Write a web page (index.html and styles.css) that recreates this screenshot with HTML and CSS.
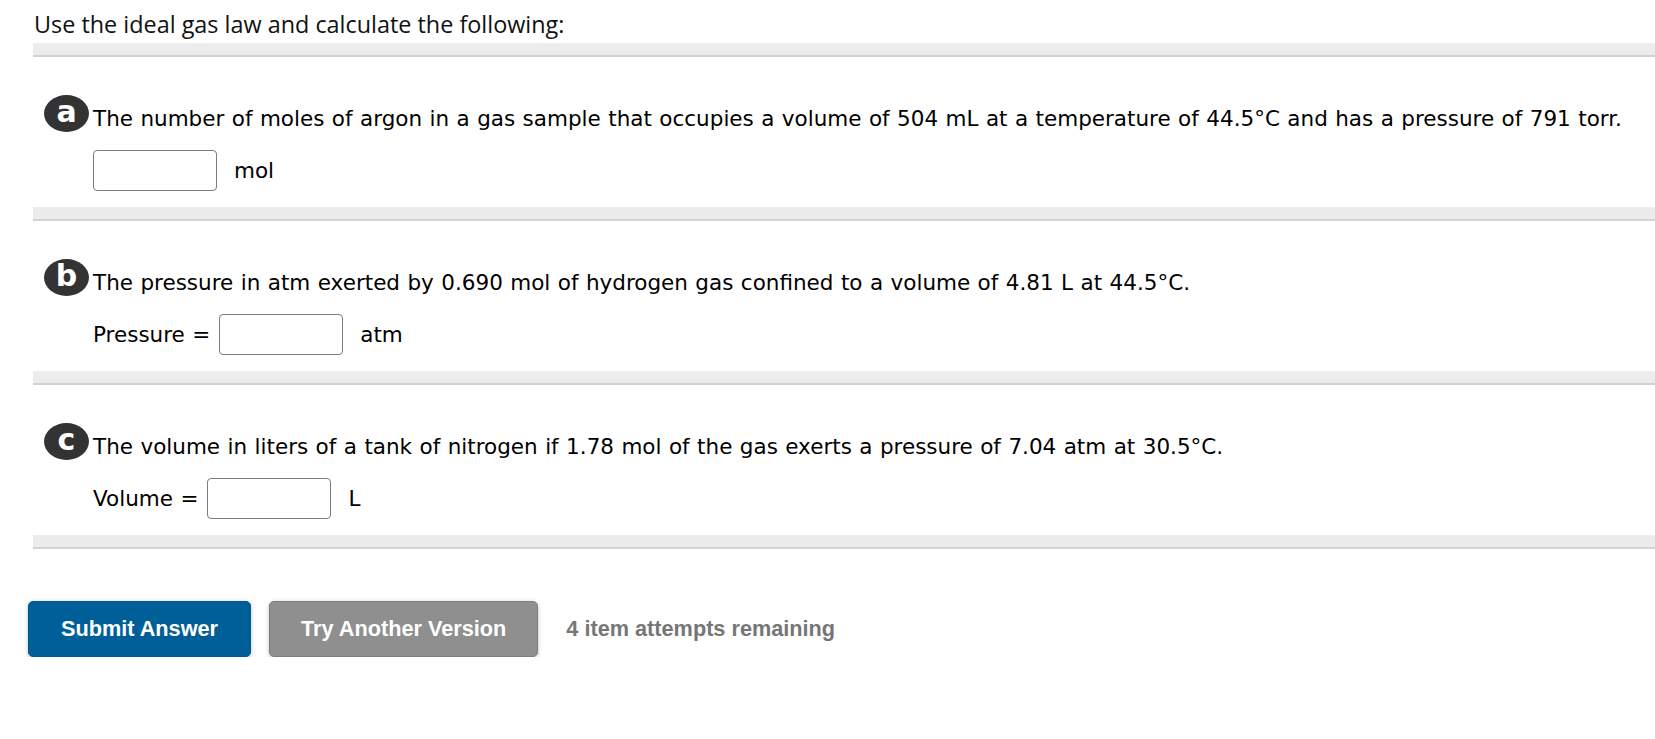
FILE: index.html
```html
<!DOCTYPE html>
<html lang="en">
<head>
<meta charset="utf-8">
<title>Ideal gas law</title>
<link rel="stylesheet" href="styles.css">
</head>
<body>
<div class="page">
  <h1 class="intro">Use the ideal gas law and calculate the following:</h1>
  <div class="divider"></div>

  <section class="part">
    <div class="question">
      <span class="badge">a</span>
      <p class="qtext">The number of moles of argon in a gas sample that occupies a volume of 504 mL at a temperature of 44.5°C and has a pressure of 791 torr.</p>
    </div>
    <div class="answer">
      <input class="box" type="text" aria-label="moles">
      <span class="unit">mol</span>
    </div>
  </section>
  <div class="divider"></div>

  <section class="part">
    <div class="question">
      <span class="badge">b</span>
      <p class="qtext">The pressure in atm exerted by 0.690 mol of hydrogen gas confined to a volume of 4.81 L at 44.5°C.</p>
    </div>
    <div class="answer">
      <span class="label">Pressure =</span>
      <input class="box" type="text" aria-label="Pressure">
      <span class="unit">atm</span>
    </div>
  </section>
  <div class="divider"></div>

  <section class="part">
    <div class="question">
      <span class="badge">c</span>
      <p class="qtext">The volume in liters of a tank of nitrogen if 1.78 mol of the gas exerts a pressure of 7.04 atm at 30.5°C.</p>
    </div>
    <div class="answer">
      <span class="label">Volume =</span>
      <input class="box" type="text" aria-label="Volume">
      <span class="unit">L</span>
    </div>
  </section>
  <div class="divider"></div>

  <div class="actions">
    <button class="btn btn-primary" type="button">Submit Answer</button>
    <button class="btn btn-secondary" type="button">Try Another Version</button>
    <span class="attempts">4 item attempts remaining</span>
  </div>
</div>
</body>
</html>
```

FILE: styles.css
```css
html, body {
  margin: 0;
  padding: 0;
  background: #ffffff;
}

.page {
  padding-left: 33px;
  color: #000;
}

.intro {
  margin: 9px 0 4px 1px;
  font-family: "Open Sans", "Liberation Sans", sans-serif;
  font-weight: 400;
  font-size: 23.4px;
  line-height: 30px;
  color: #111;
}

.divider {
  height: 12px;
  background: #ececec;
  border-bottom: 2px solid #d2d2d2;
}

.part {
  padding: 38px 0 16px 11px;
  font-family: "DejaVu Sans", Verdana, sans-serif;
  font-size: 21.5px;
  word-spacing: 0.6px;
}

.question {
  display: flex;
  align-items: flex-start;
  height: 37px;
}

.badge {
  flex: 0 0 auto;
  width: 45px;
  height: 37px;
  border-radius: 50%;
  background: #333333;
  color: #fff;
  font-family: "DejaVu Sans", Verdana, sans-serif;
  font-weight: 700;
  font-size: 30px;
  line-height: 34px;
  text-align: center;
  word-spacing: 0;
  margin-right: 4px;
}

.qtext {
  margin: 11px 0 0 0;
  line-height: 26px;
  white-space: nowrap;
}

.answer {
  display: flex;
  align-items: center;
  margin-top: 18px;
  padding-left: 49px;
  height: 41px;
}

.label {
  margin-right: 9px;
}

.box {
  box-sizing: border-box;
  width: 124px;
  height: 41px;
  margin: 0;
  border: 1px solid #7d7d7d;
  border-radius: 4px;
  background: #fff;
}

.unit {
  margin-left: 17px;
}

.actions {
  display: flex;
  align-items: center;
  margin-top: 52px;
  margin-left: -5px;
  font-family: "Liberation Sans", Arial, sans-serif;
  font-weight: 700;
  font-size: 21.7px;
}

.btn {
  box-sizing: border-box;
  height: 56px;
  border-radius: 5px;
  font-family: inherit;
  font-weight: 700;
  font-size: inherit;
  color: #fff;
  box-shadow: 0 1px 4px rgba(0, 0, 0, 0.25);
}

.btn-primary {
  background: #005f98;
  border: 1px solid #005a90;
  padding: 0 32px;
  margin-right: 18px;
}

.btn-secondary {
  background: #8f8f8f;
  border: 1px solid #7e7e7e;
  padding: 0 31px;
  margin-right: 28px;
}

.attempts {
  color: #767676;
}
```
